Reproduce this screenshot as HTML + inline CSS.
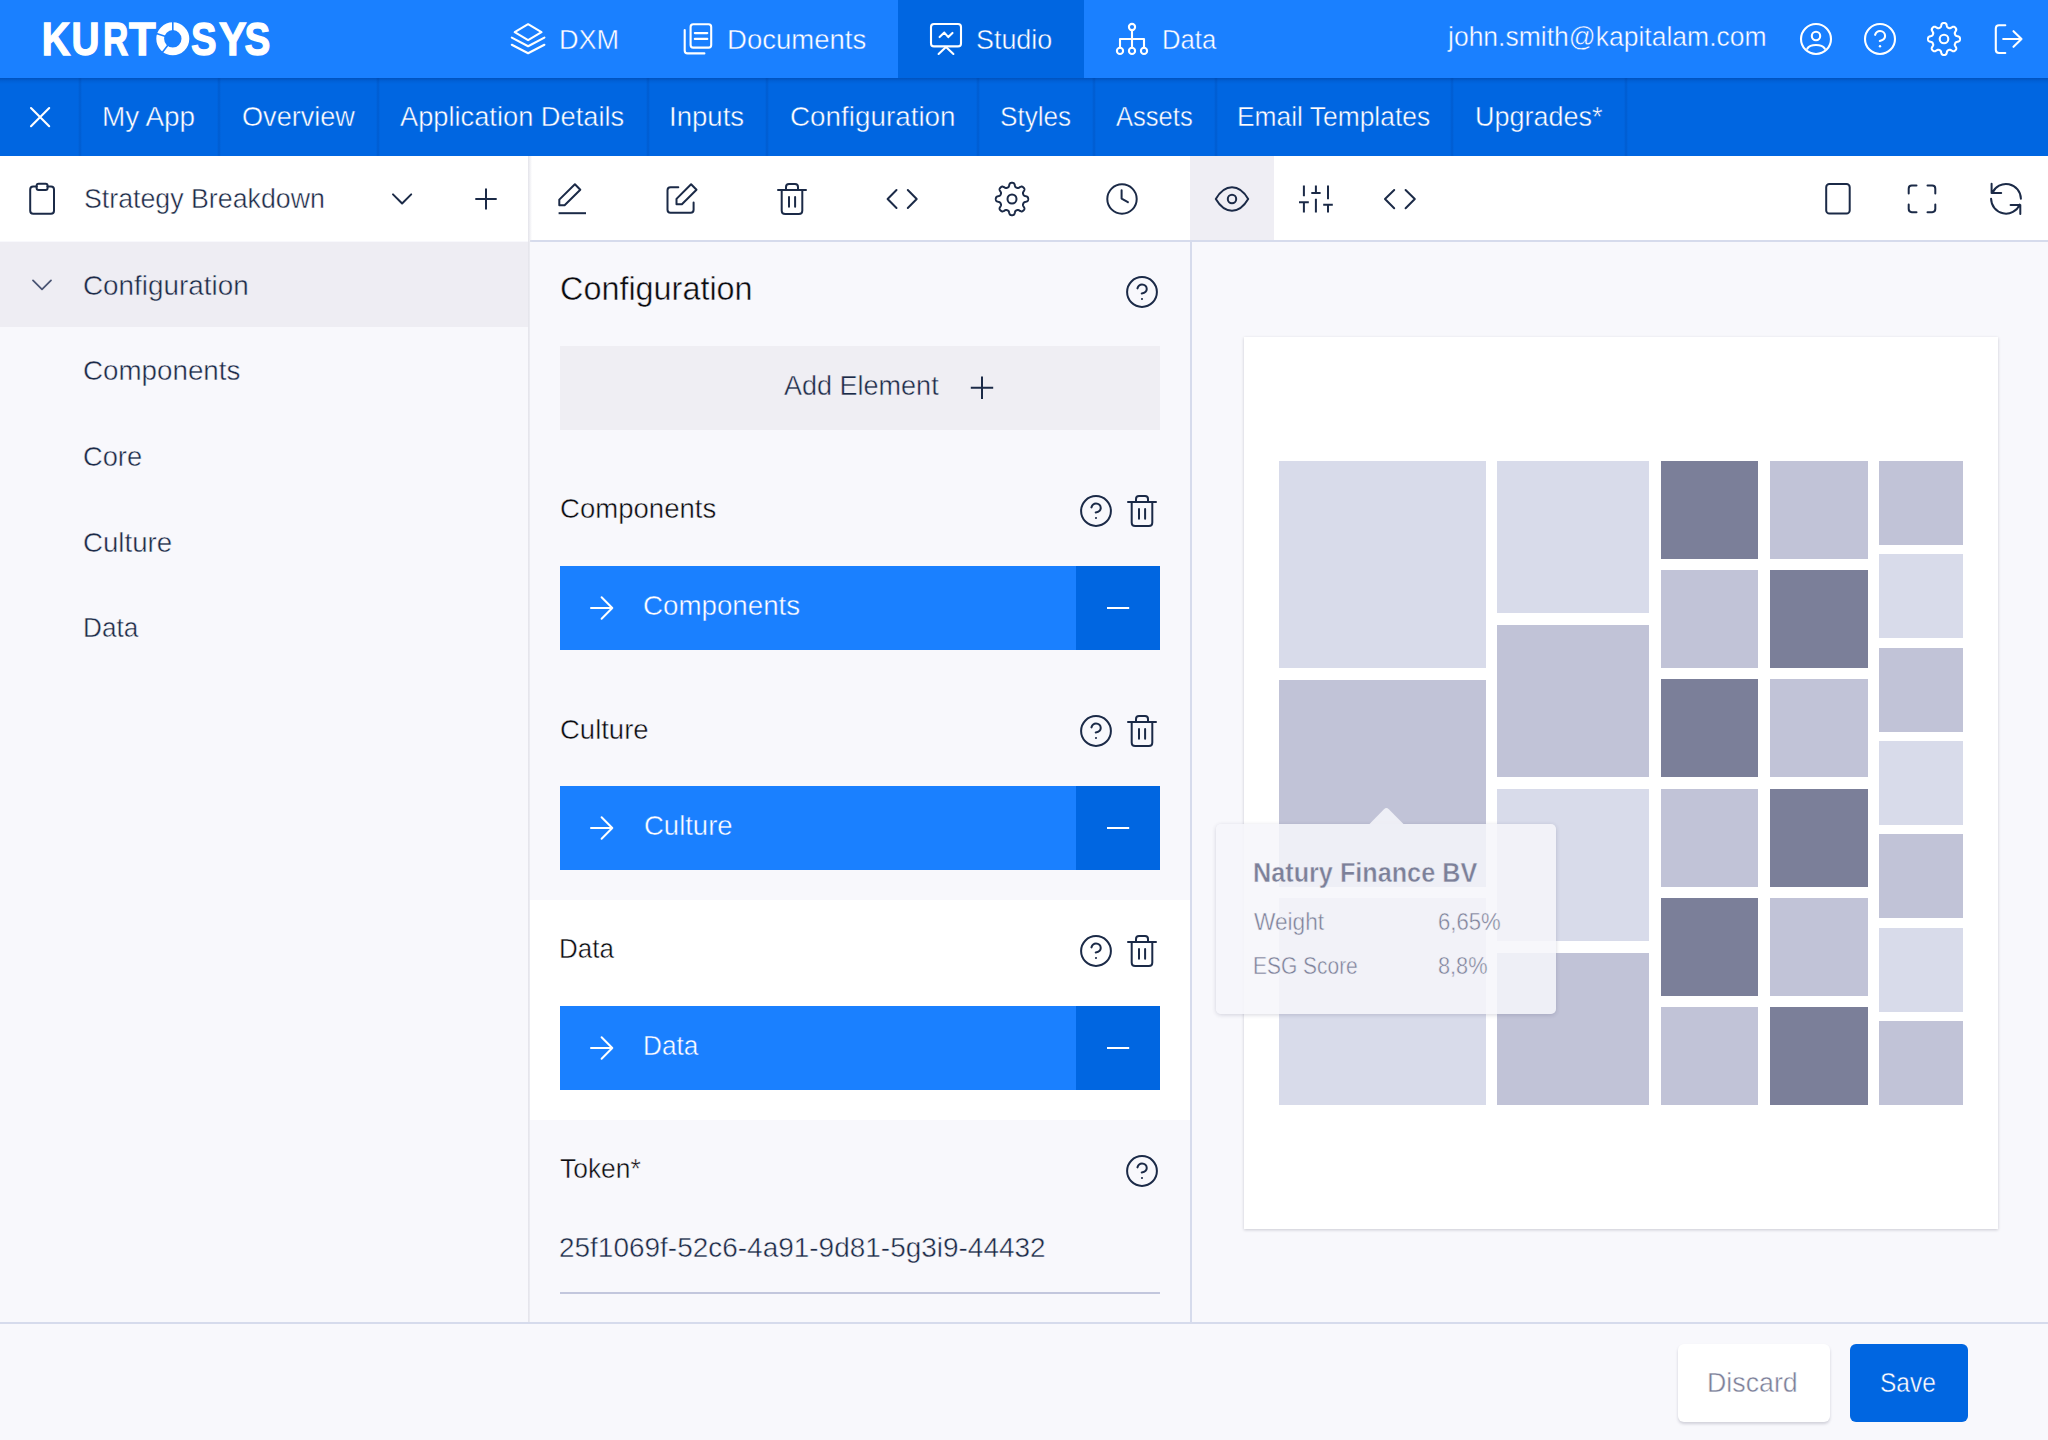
<!DOCTYPE html>
<html><head><meta charset="utf-8">
<style>
*{margin:0;padding:0;box-sizing:border-box}
html,body{width:2048px;height:1440px;overflow:hidden;background:#f8f8fc;font-family:"Liberation Sans",sans-serif;position:relative}
.a{position:absolute}
.t{position:absolute;white-space:nowrap;line-height:1;transform-origin:0 0}
svg{overflow:visible}
</style></head>
<body>
<div class="a" style="left:0px;top:0px;width:2048px;height:78px;background:#1a80ff;"></div>
<div class="a" style="left:898px;top:0px;width:186px;height:78px;background:#0066e1;"></div>
<div class="a" style="left:0px;top:78px;width:2048px;height:78px;background:#0066e1;"></div>
<div class="a" style="left:0px;top:78px;width:2048px;height:6px;background:linear-gradient(rgba(0,25,90,0.26),rgba(0,25,90,0.08) 50%,rgba(0,25,90,0));"></div>
<div class="a" style="left:78px;top:78px;width:4px;height:78px;background:linear-gradient(90deg,rgba(0,30,100,0),rgba(0,30,100,0.14),rgba(0,30,100,0));"></div>
<div class="a" style="left:217px;top:78px;width:4px;height:78px;background:linear-gradient(90deg,rgba(0,30,100,0),rgba(0,30,100,0.14),rgba(0,30,100,0));"></div>
<div class="a" style="left:376px;top:78px;width:4px;height:78px;background:linear-gradient(90deg,rgba(0,30,100,0),rgba(0,30,100,0.14),rgba(0,30,100,0));"></div>
<div class="a" style="left:646px;top:78px;width:4px;height:78px;background:linear-gradient(90deg,rgba(0,30,100,0),rgba(0,30,100,0.14),rgba(0,30,100,0));"></div>
<div class="a" style="left:765px;top:78px;width:4px;height:78px;background:linear-gradient(90deg,rgba(0,30,100,0),rgba(0,30,100,0.14),rgba(0,30,100,0));"></div>
<div class="a" style="left:976px;top:78px;width:4px;height:78px;background:linear-gradient(90deg,rgba(0,30,100,0),rgba(0,30,100,0.14),rgba(0,30,100,0));"></div>
<div class="a" style="left:1092px;top:78px;width:4px;height:78px;background:linear-gradient(90deg,rgba(0,30,100,0),rgba(0,30,100,0.14),rgba(0,30,100,0));"></div>
<div class="a" style="left:1214px;top:78px;width:4px;height:78px;background:linear-gradient(90deg,rgba(0,30,100,0),rgba(0,30,100,0.14),rgba(0,30,100,0));"></div>
<div class="a" style="left:1450px;top:78px;width:4px;height:78px;background:linear-gradient(90deg,rgba(0,30,100,0),rgba(0,30,100,0.14),rgba(0,30,100,0));"></div>
<div class="a" style="left:1624px;top:78px;width:4px;height:78px;background:linear-gradient(90deg,rgba(0,30,100,0),rgba(0,30,100,0.14),rgba(0,30,100,0));"></div>
<div class="a" style="left:0px;top:156px;width:2048px;height:85px;background:#fff;"></div>
<div class="a" style="left:1190px;top:156px;width:84px;height:85px;background:#efeef4;"></div>
<div class="a" style="left:530px;top:240px;width:1518px;height:2px;background:#d6dbec;"></div>
<div class="a" style="left:0px;top:242px;width:528px;height:85px;background:#eeedf3;"></div>
<div class="a" style="left:528px;top:156px;width:4px;height:1167px;background:linear-gradient(90deg,#e3e3ea,rgba(240,240,245,0));"></div>
<div class="a" style="left:530px;top:242px;width:660px;height:1081px;background:#f8f8fc;"></div>
<div class="a" style="left:530px;top:900px;width:660px;height:220px;background:#fff;"></div>
<div class="a" style="left:1190px;top:242px;width:2px;height:1081px;background:#d6dbec;"></div>
<div class="a" style="left:560px;top:346px;width:600px;height:84px;background:#efeef3;"></div>
<div class="a" style="left:560px;top:566px;width:600px;height:84px;background:#1a80ff;"></div>
<div class="a" style="left:1076px;top:566px;width:84px;height:84px;background:#0066e1;"></div>
<div class="a" style="left:560px;top:786px;width:600px;height:84px;background:#1a80ff;"></div>
<div class="a" style="left:1076px;top:786px;width:84px;height:84px;background:#0066e1;"></div>
<div class="a" style="left:560px;top:1006px;width:600px;height:84px;background:#1a80ff;"></div>
<div class="a" style="left:1076px;top:1006px;width:84px;height:84px;background:#0066e1;"></div>
<div class="a" style="left:560px;top:1292px;width:600px;height:2px;background:#c3c7dd;"></div>
<div class="a" style="left:1244px;top:337px;width:754px;height:892px;background:#fff;box-shadow:0 1px 3px rgba(20,20,40,0.2)"></div>
<div class="a" style="left:1279px;top:461.0px;width:207px;height:207.0px;background:#d8dbea;"></div>
<div class="a" style="left:1279px;top:679.5px;width:207px;height:207.0px;background:#c1c3d7;"></div>
<div class="a" style="left:1279px;top:898.0px;width:207px;height:207.0px;background:#d8dbea;"></div>
<div class="a" style="left:1497px;top:461.0px;width:152px;height:152.0px;background:#d8dbea;"></div>
<div class="a" style="left:1497px;top:625.0px;width:152px;height:152.0px;background:#c1c3d7;"></div>
<div class="a" style="left:1497px;top:789.0px;width:152px;height:152.0px;background:#d8dbea;"></div>
<div class="a" style="left:1497px;top:953.0px;width:152px;height:152.0px;background:#c1c3d7;"></div>
<div class="a" style="left:1661px;top:461.0px;width:97.40000000000009px;height:98.0px;background:#7b7f99;"></div>
<div class="a" style="left:1661px;top:570.2px;width:97.40000000000009px;height:98.0px;background:#c1c3d7;"></div>
<div class="a" style="left:1661px;top:679.4px;width:97.40000000000009px;height:98.0px;background:#7b7f99;"></div>
<div class="a" style="left:1661px;top:788.6px;width:97.40000000000009px;height:98.0px;background:#c1c3d7;"></div>
<div class="a" style="left:1661px;top:897.8px;width:97.40000000000009px;height:98.0px;background:#7b7f99;"></div>
<div class="a" style="left:1661px;top:1007.0px;width:97.40000000000009px;height:98.0px;background:#c1c3d7;"></div>
<div class="a" style="left:1769.8px;top:461.0px;width:97.79999999999995px;height:98.0px;background:#c1c3d7;"></div>
<div class="a" style="left:1769.8px;top:570.2px;width:97.79999999999995px;height:98.0px;background:#7b7f99;"></div>
<div class="a" style="left:1769.8px;top:679.4px;width:97.79999999999995px;height:98.0px;background:#c1c3d7;"></div>
<div class="a" style="left:1769.8px;top:788.6px;width:97.79999999999995px;height:98.0px;background:#7b7f99;"></div>
<div class="a" style="left:1769.8px;top:897.8px;width:97.79999999999995px;height:98.0px;background:#c1c3d7;"></div>
<div class="a" style="left:1769.8px;top:1007.0px;width:97.79999999999995px;height:98.0px;background:#7b7f99;"></div>
<div class="a" style="left:1879px;top:461.0px;width:84px;height:84.0px;background:#c1c3d7;"></div>
<div class="a" style="left:1879px;top:554.33px;width:84px;height:84.0px;background:#d8dbea;"></div>
<div class="a" style="left:1879px;top:647.67px;width:84px;height:84.0px;background:#c1c3d7;"></div>
<div class="a" style="left:1879px;top:741.0px;width:84px;height:84.0px;background:#d8dbea;"></div>
<div class="a" style="left:1879px;top:834.33px;width:84px;height:84.0px;background:#c1c3d7;"></div>
<div class="a" style="left:1879px;top:927.66px;width:84px;height:84.0px;background:#d8dbea;"></div>
<div class="a" style="left:1879px;top:1021.0px;width:84px;height:84.0px;background:#c1c3d7;"></div>
<div class="a" style="left:1216px;top:824px;width:340px;height:190px;background:rgba(246,246,250,0.86);border-radius:5px;box-shadow:0 1px 4px rgba(40,40,80,0.18)"></div>
<svg class="a" style="left:0;top:0" width="2048" height="1440"><path d="M1369.5,824 L1384,809.2 Q1386.4,806.8 1388.8,809.2 L1403.5,824 Z" fill="rgba(246,246,250,0.86)"/></svg>
<div class="a" style="left:0px;top:1322px;width:2048px;height:2px;background:#d6dbec;"></div>
<div class="a" style="left:1678px;top:1344px;width:152px;height:78px;background:#fff;border-radius:6px;box-shadow:0 2px 3px rgba(30,30,60,0.18)"></div>
<div class="a" style="left:1850px;top:1344px;width:118px;height:78px;background:#0066e1;border-radius:6px"></div>
<svg class="a" style="left:0;top:0" width="2048" height="1440"><g fill="none" stroke="#fff" stroke-width="2.1" stroke-linecap="round" stroke-linejoin="round"><path d="M528.1,24.2 L541.5,32.2 L528.1,40.1 L514.7,32.2 Z"/><path d="M511.8,37.6 L528.1,46.2 L544.4,37.6"/><path d="M511.8,44.8 L528.1,53.2 L544.4,44.8"/><rect x="690.6" y="24.3" width="20.6" height="23.3" rx="2.6"/><path d="M694.8,33.1 H707.3 M694.8,38.9 H707.3"/><path d="M684.7,30 V50.5 Q684.7,53.4 687.6,53.4 H704.4"/><rect x="931" y="24" width="30" height="22.4" rx="3"/><path d="M939.6,37.1 L944.3,32.6 L948.3,37.1 L952.5,32.9"/><path d="M938.6,54 L946,47 L953.4,54"/><circle cx="1132" cy="27" r="3.1"/><circle cx="1120" cy="50.9" r="3.1"/><circle cx="1132" cy="50.9" r="3.1"/><circle cx="1144" cy="50.9" r="3.1"/><path d="M1132,30.1 V47.8 M1120,47.8 V39 H1144 V47.8"/><circle cx="1816" cy="39" r="15"/><circle cx="1816" cy="36" r="4.2"/><path d="M1807.3,48.6 C1809,45.8 1812,45 1816,45 C1820,45 1823,45.8 1824.8,48.6"/><circle cx="1880" cy="39" r="15"/><path d="M1875.1,34.8 C1876,32.2 1878,31 1880,31 C1882.9,31 1885.1,33.1 1885.1,35.9 C1885.1,38.9 1882.6,40.2 1879.8,40.9"/><circle cx="1880" cy="46.3" r="1.2" fill="#fff" stroke="none"/><path d="M1944.00,23.00 L1944.21,23.00 L1944.42,23.02 L1944.63,23.04 L1944.84,23.07 L1945.04,23.11 L1945.25,23.17 L1945.45,23.24 L1945.65,23.35 L1945.84,23.48 L1946.02,23.65 L1946.19,23.88 L1946.35,24.15 L1946.49,24.49 L1946.62,24.86 L1946.73,25.27 L1946.83,25.67 L1946.93,26.05 L1947.03,26.39 L1947.13,26.67 L1947.24,26.90 L1947.36,27.09 L1947.48,27.24 L1947.61,27.37 L1947.74,27.47 L1947.88,27.57 L1948.02,27.65 L1948.16,27.72 L1948.30,27.79 L1948.45,27.85 L1948.59,27.91 L1948.74,27.97 L1948.89,28.03 L1949.03,28.08 L1949.19,28.13 L1949.34,28.17 L1949.50,28.20 L1949.67,28.22 L1949.85,28.23 L1950.05,28.21 L1950.26,28.16 L1950.50,28.07 L1950.78,27.94 L1951.08,27.77 L1951.42,27.57 L1951.78,27.36 L1952.14,27.15 L1952.50,26.97 L1952.83,26.84 L1953.14,26.76 L1953.42,26.72 L1953.68,26.73 L1953.91,26.77 L1954.12,26.84 L1954.31,26.92 L1954.50,27.03 L1954.68,27.14 L1954.84,27.27 L1955.01,27.40 L1955.16,27.54 L1955.31,27.69 L1955.46,27.84 L1955.60,27.99 L1955.73,28.16 L1955.86,28.32 L1955.97,28.50 L1956.08,28.69 L1956.16,28.88 L1956.23,29.09 L1956.27,29.32 L1956.28,29.58 L1956.24,29.86 L1956.16,30.17 L1956.03,30.50 L1955.85,30.86 L1955.64,31.22 L1955.43,31.58 L1955.23,31.92 L1955.06,32.22 L1954.93,32.50 L1954.84,32.74 L1954.79,32.95 L1954.77,33.15 L1954.78,33.33 L1954.80,33.50 L1954.83,33.66 L1954.87,33.81 L1954.92,33.97 L1954.97,34.11 L1955.03,34.26 L1955.09,34.41 L1955.15,34.55 L1955.21,34.70 L1955.28,34.84 L1955.35,34.98 L1955.43,35.12 L1955.53,35.26 L1955.63,35.39 L1955.76,35.52 L1955.91,35.64 L1956.10,35.76 L1956.33,35.87 L1956.61,35.97 L1956.95,36.07 L1957.33,36.17 L1957.73,36.27 L1958.14,36.38 L1958.51,36.51 L1958.85,36.65 L1959.12,36.81 L1959.35,36.98 L1959.52,37.16 L1959.65,37.35 L1959.76,37.55 L1959.83,37.75 L1959.89,37.96 L1959.93,38.16 L1959.96,38.37 L1959.98,38.58 L1960.00,38.79 L1960.00,39.00 L1960.00,39.21 L1959.98,39.42 L1959.96,39.63 L1959.93,39.84 L1959.89,40.04 L1959.83,40.25 L1959.76,40.45 L1959.65,40.65 L1959.52,40.84 L1959.35,41.02 L1959.12,41.19 L1958.85,41.35 L1958.51,41.49 L1958.14,41.62 L1957.73,41.73 L1957.33,41.83 L1956.95,41.93 L1956.61,42.03 L1956.33,42.13 L1956.10,42.24 L1955.91,42.36 L1955.76,42.48 L1955.63,42.61 L1955.53,42.74 L1955.43,42.88 L1955.35,43.02 L1955.28,43.16 L1955.21,43.30 L1955.15,43.45 L1955.09,43.59 L1955.03,43.74 L1954.97,43.89 L1954.92,44.03 L1954.87,44.19 L1954.83,44.34 L1954.80,44.50 L1954.78,44.67 L1954.77,44.85 L1954.79,45.05 L1954.84,45.26 L1954.93,45.50 L1955.06,45.78 L1955.23,46.08 L1955.43,46.42 L1955.64,46.78 L1955.85,47.14 L1956.03,47.50 L1956.16,47.83 L1956.24,48.14 L1956.28,48.42 L1956.27,48.68 L1956.23,48.91 L1956.16,49.12 L1956.08,49.31 L1955.97,49.50 L1955.86,49.68 L1955.73,49.84 L1955.60,50.01 L1955.46,50.16 L1955.31,50.31 L1955.16,50.46 L1955.01,50.60 L1954.84,50.73 L1954.68,50.86 L1954.50,50.97 L1954.31,51.08 L1954.12,51.16 L1953.91,51.23 L1953.68,51.27 L1953.42,51.28 L1953.14,51.24 L1952.83,51.16 L1952.50,51.03 L1952.14,50.85 L1951.78,50.64 L1951.42,50.43 L1951.08,50.23 L1950.78,50.06 L1950.50,49.93 L1950.26,49.84 L1950.05,49.79 L1949.85,49.77 L1949.67,49.78 L1949.50,49.80 L1949.34,49.83 L1949.19,49.87 L1949.03,49.92 L1948.89,49.97 L1948.74,50.03 L1948.59,50.09 L1948.45,50.15 L1948.30,50.21 L1948.16,50.28 L1948.02,50.35 L1947.88,50.43 L1947.74,50.53 L1947.61,50.63 L1947.48,50.76 L1947.36,50.91 L1947.24,51.10 L1947.13,51.33 L1947.03,51.61 L1946.93,51.95 L1946.83,52.33 L1946.73,52.73 L1946.62,53.14 L1946.49,53.51 L1946.35,53.85 L1946.19,54.12 L1946.02,54.35 L1945.84,54.52 L1945.65,54.65 L1945.45,54.76 L1945.25,54.83 L1945.04,54.89 L1944.84,54.93 L1944.63,54.96 L1944.42,54.98 L1944.21,55.00 L1944.00,55.00 L1943.79,55.00 L1943.58,54.98 L1943.37,54.96 L1943.16,54.93 L1942.96,54.89 L1942.75,54.83 L1942.55,54.76 L1942.35,54.65 L1942.16,54.52 L1941.98,54.35 L1941.81,54.12 L1941.65,53.85 L1941.51,53.51 L1941.38,53.14 L1941.27,52.73 L1941.17,52.33 L1941.07,51.95 L1940.97,51.61 L1940.87,51.33 L1940.76,51.10 L1940.64,50.91 L1940.52,50.76 L1940.39,50.63 L1940.26,50.53 L1940.12,50.43 L1939.98,50.35 L1939.84,50.28 L1939.70,50.21 L1939.55,50.15 L1939.41,50.09 L1939.26,50.03 L1939.11,49.97 L1938.97,49.92 L1938.81,49.87 L1938.66,49.83 L1938.50,49.80 L1938.33,49.78 L1938.15,49.77 L1937.95,49.79 L1937.74,49.84 L1937.50,49.93 L1937.22,50.06 L1936.92,50.23 L1936.58,50.43 L1936.22,50.64 L1935.86,50.85 L1935.50,51.03 L1935.17,51.16 L1934.86,51.24 L1934.58,51.28 L1934.32,51.27 L1934.09,51.23 L1933.88,51.16 L1933.69,51.08 L1933.50,50.97 L1933.32,50.86 L1933.16,50.73 L1932.99,50.60 L1932.84,50.46 L1932.69,50.31 L1932.54,50.16 L1932.40,50.01 L1932.27,49.84 L1932.14,49.68 L1932.03,49.50 L1931.92,49.31 L1931.84,49.12 L1931.77,48.91 L1931.73,48.68 L1931.72,48.42 L1931.76,48.14 L1931.84,47.83 L1931.97,47.50 L1932.15,47.14 L1932.36,46.78 L1932.57,46.42 L1932.77,46.08 L1932.94,45.78 L1933.07,45.50 L1933.16,45.26 L1933.21,45.05 L1933.23,44.85 L1933.22,44.67 L1933.20,44.50 L1933.17,44.34 L1933.13,44.19 L1933.08,44.03 L1933.03,43.89 L1932.97,43.74 L1932.91,43.59 L1932.85,43.45 L1932.79,43.30 L1932.72,43.16 L1932.65,43.02 L1932.57,42.88 L1932.47,42.74 L1932.37,42.61 L1932.24,42.48 L1932.09,42.36 L1931.90,42.24 L1931.67,42.13 L1931.39,42.03 L1931.05,41.93 L1930.67,41.83 L1930.27,41.73 L1929.86,41.62 L1929.49,41.49 L1929.15,41.35 L1928.88,41.19 L1928.65,41.02 L1928.48,40.84 L1928.35,40.65 L1928.24,40.45 L1928.17,40.25 L1928.11,40.04 L1928.07,39.84 L1928.04,39.63 L1928.02,39.42 L1928.00,39.21 L1928.00,39.00 L1928.00,38.79 L1928.02,38.58 L1928.04,38.37 L1928.07,38.16 L1928.11,37.96 L1928.17,37.75 L1928.24,37.55 L1928.35,37.35 L1928.48,37.16 L1928.65,36.98 L1928.88,36.81 L1929.15,36.65 L1929.49,36.51 L1929.86,36.38 L1930.27,36.27 L1930.67,36.17 L1931.05,36.07 L1931.39,35.97 L1931.67,35.87 L1931.90,35.76 L1932.09,35.64 L1932.24,35.52 L1932.37,35.39 L1932.47,35.26 L1932.57,35.12 L1932.65,34.98 L1932.72,34.84 L1932.79,34.70 L1932.85,34.55 L1932.91,34.41 L1932.97,34.26 L1933.03,34.11 L1933.08,33.97 L1933.13,33.81 L1933.17,33.66 L1933.20,33.50 L1933.22,33.33 L1933.23,33.15 L1933.21,32.95 L1933.16,32.74 L1933.07,32.50 L1932.94,32.22 L1932.77,31.92 L1932.57,31.58 L1932.36,31.22 L1932.15,30.86 L1931.97,30.50 L1931.84,30.17 L1931.76,29.86 L1931.72,29.58 L1931.73,29.32 L1931.77,29.09 L1931.84,28.88 L1931.92,28.69 L1932.03,28.50 L1932.14,28.32 L1932.27,28.16 L1932.40,27.99 L1932.54,27.84 L1932.69,27.69 L1932.84,27.54 L1932.99,27.40 L1933.16,27.27 L1933.32,27.14 L1933.50,27.03 L1933.69,26.92 L1933.88,26.84 L1934.09,26.77 L1934.32,26.73 L1934.58,26.72 L1934.86,26.76 L1935.17,26.84 L1935.50,26.97 L1935.86,27.15 L1936.22,27.36 L1936.58,27.57 L1936.92,27.77 L1937.22,27.94 L1937.50,28.07 L1937.74,28.16 L1937.95,28.21 L1938.15,28.23 L1938.33,28.22 L1938.50,28.20 L1938.66,28.17 L1938.81,28.13 L1938.97,28.08 L1939.11,28.03 L1939.26,27.97 L1939.41,27.91 L1939.55,27.85 L1939.70,27.79 L1939.84,27.72 L1939.98,27.65 L1940.12,27.57 L1940.26,27.47 L1940.39,27.37 L1940.52,27.24 L1940.64,27.09 L1940.76,26.90 L1940.87,26.67 L1940.97,26.39 L1941.07,26.05 L1941.17,25.67 L1941.27,25.27 L1941.38,24.86 L1941.51,24.49 L1941.65,24.15 L1941.81,23.88 L1941.98,23.65 L1942.16,23.48 L1942.35,23.35 L1942.55,23.24 L1942.75,23.17 L1942.96,23.11 L1943.16,23.07 L1943.37,23.04 L1943.58,23.02 L1943.79,23.00 Z"/><circle cx="1944" cy="39" r="4.3"/><path d="M2005.3,25.2 H1999 Q1995.8,25.2 1995.8,28.4 V49.8 Q1995.8,53 1999,53 H2005.3"/><path d="M2003.2,39 H2021.5 M2013.5,31.2 L2021.5,39 L2013.5,46.8"/><path d="M31,108 L49.2,126.2 M49.2,108 L31,126.2"/></g><g fill="none" stroke="#fff" stroke-width="2" stroke-linecap="round" stroke-linejoin="round"><path d="M591,608 H612.3 M601.6,597.3 L612.3,608 L601.6,618.7"/><path d="M1107,608 H1129.2" stroke-linecap="butt"/><path d="M591,828 H612.3 M601.6,817.3 L612.3,828 L601.6,838.7"/><path d="M1107,828 H1129.2" stroke-linecap="butt"/><path d="M591,1048 H612.3 M601.6,1037.3 L612.3,1048 L601.6,1058.7"/><path d="M1107,1048 H1129.2" stroke-linecap="butt"/></g><g fill="none" stroke="#1b2a47" stroke-width="2" stroke-linecap="round" stroke-linejoin="round"><path d="M36.8,186.6 H33.2 Q30.2,186.6 30.2,189.6 V210.8 Q30.2,213.8 33.2,213.8 H51 Q54,213.8 54,210.8 V189.6 Q54,186.6 51,186.6 H47.4"/><rect x="36.6" y="183.8" width="11" height="6.2" rx="2"/><path d="M393,194.4 L402.1,203.5 L411.2,194.4"/><path d="M486,188.5 V209.5 M475.3,199 H496.7" stroke-linecap="butt"/><path d="M559.3,205.3 V199.6 L574.9,184.3 L580.3,189.8 L564.6,205.3 Z"/><path d="M558.6,213.2 H586" stroke-linecap="butt"/><path d="M678.3,187.3 H670.5 Q667.5,187.3 667.5,190.3 V209.8 Q667.5,212.8 670.5,212.8 H690.6 Q693.6,212.8 693.6,209.8 V202.6"/><path d="M676.5,204.2 V198.9 L691.1,184.3 L696.5,189.8 L681.9,204.2 Z"/><path d="M778,190 H806"/><path d="M786,190 V187 Q786,184 789,184 H795 Q798,184 798,187 V190"/><path d="M781.7,190 V210.5 Q781.7,214 785.2,214 H798.8 Q802.3,214 802.3,210.5 V190"/><path d="M789,197 V206.7 M795.1,197 V206.7"/><path d="M896.5,190 L887.6,199 L896.5,208 M907.8,190 L916.7,199 L907.8,208"/><path d="M1012.00,182.80 L1012.21,182.80 L1012.42,182.82 L1012.64,182.84 L1012.85,182.87 L1013.05,182.91 L1013.26,182.97 L1013.47,183.05 L1013.67,183.15 L1013.86,183.28 L1014.05,183.46 L1014.22,183.68 L1014.38,183.96 L1014.53,184.29 L1014.66,184.67 L1014.77,185.07 L1014.87,185.48 L1014.97,185.86 L1015.07,186.19 L1015.18,186.48 L1015.29,186.71 L1015.41,186.90 L1015.54,187.05 L1015.67,187.18 L1015.81,187.28 L1015.95,187.38 L1016.09,187.46 L1016.23,187.53 L1016.38,187.60 L1016.52,187.67 L1016.67,187.73 L1016.82,187.79 L1016.97,187.85 L1017.12,187.90 L1017.27,187.95 L1017.43,187.99 L1017.59,188.02 L1017.76,188.05 L1017.95,188.05 L1018.14,188.03 L1018.36,187.98 L1018.61,187.90 L1018.88,187.77 L1019.19,187.60 L1019.53,187.41 L1019.89,187.19 L1020.26,186.99 L1020.61,186.81 L1020.95,186.68 L1021.26,186.60 L1021.54,186.56 L1021.80,186.57 L1022.03,186.61 L1022.24,186.68 L1022.44,186.77 L1022.63,186.88 L1022.81,186.99 L1022.98,187.12 L1023.14,187.26 L1023.30,187.40 L1023.46,187.54 L1023.60,187.70 L1023.74,187.86 L1023.88,188.02 L1024.01,188.19 L1024.12,188.37 L1024.23,188.56 L1024.32,188.76 L1024.39,188.97 L1024.43,189.20 L1024.44,189.46 L1024.40,189.74 L1024.32,190.05 L1024.19,190.39 L1024.01,190.74 L1023.81,191.11 L1023.59,191.47 L1023.40,191.81 L1023.23,192.12 L1023.10,192.39 L1023.02,192.64 L1022.97,192.86 L1022.95,193.05 L1022.95,193.24 L1022.98,193.41 L1023.01,193.57 L1023.05,193.73 L1023.10,193.88 L1023.15,194.03 L1023.21,194.18 L1023.27,194.33 L1023.33,194.48 L1023.40,194.62 L1023.47,194.77 L1023.54,194.91 L1023.62,195.05 L1023.72,195.19 L1023.82,195.33 L1023.95,195.46 L1024.10,195.59 L1024.29,195.71 L1024.52,195.82 L1024.81,195.93 L1025.14,196.03 L1025.52,196.13 L1025.93,196.23 L1026.33,196.34 L1026.71,196.47 L1027.04,196.62 L1027.32,196.78 L1027.54,196.95 L1027.72,197.14 L1027.85,197.33 L1027.95,197.53 L1028.03,197.74 L1028.09,197.95 L1028.13,198.15 L1028.16,198.36 L1028.18,198.58 L1028.20,198.79 L1028.20,199.00 L1028.20,199.21 L1028.18,199.42 L1028.16,199.64 L1028.13,199.85 L1028.09,200.05 L1028.03,200.26 L1027.95,200.47 L1027.85,200.67 L1027.72,200.86 L1027.54,201.05 L1027.32,201.22 L1027.04,201.38 L1026.71,201.53 L1026.33,201.66 L1025.93,201.77 L1025.52,201.87 L1025.14,201.97 L1024.81,202.07 L1024.52,202.18 L1024.29,202.29 L1024.10,202.41 L1023.95,202.54 L1023.82,202.67 L1023.72,202.81 L1023.62,202.95 L1023.54,203.09 L1023.47,203.23 L1023.40,203.38 L1023.33,203.52 L1023.27,203.67 L1023.21,203.82 L1023.15,203.97 L1023.10,204.12 L1023.05,204.27 L1023.01,204.43 L1022.98,204.59 L1022.95,204.76 L1022.95,204.95 L1022.97,205.14 L1023.02,205.36 L1023.10,205.61 L1023.23,205.88 L1023.40,206.19 L1023.59,206.53 L1023.81,206.89 L1024.01,207.26 L1024.19,207.61 L1024.32,207.95 L1024.40,208.26 L1024.44,208.54 L1024.43,208.80 L1024.39,209.03 L1024.32,209.24 L1024.23,209.44 L1024.12,209.63 L1024.01,209.81 L1023.88,209.98 L1023.74,210.14 L1023.60,210.30 L1023.46,210.46 L1023.30,210.60 L1023.14,210.74 L1022.98,210.88 L1022.81,211.01 L1022.63,211.12 L1022.44,211.23 L1022.24,211.32 L1022.03,211.39 L1021.80,211.43 L1021.54,211.44 L1021.26,211.40 L1020.95,211.32 L1020.61,211.19 L1020.26,211.01 L1019.89,210.81 L1019.53,210.59 L1019.19,210.40 L1018.88,210.23 L1018.61,210.10 L1018.36,210.02 L1018.14,209.97 L1017.95,209.95 L1017.76,209.95 L1017.59,209.98 L1017.43,210.01 L1017.27,210.05 L1017.12,210.10 L1016.97,210.15 L1016.82,210.21 L1016.67,210.27 L1016.52,210.33 L1016.38,210.40 L1016.23,210.47 L1016.09,210.54 L1015.95,210.62 L1015.81,210.72 L1015.67,210.82 L1015.54,210.95 L1015.41,211.10 L1015.29,211.29 L1015.18,211.52 L1015.07,211.81 L1014.97,212.14 L1014.87,212.52 L1014.77,212.93 L1014.66,213.33 L1014.53,213.71 L1014.38,214.04 L1014.22,214.32 L1014.05,214.54 L1013.86,214.72 L1013.67,214.85 L1013.47,214.95 L1013.26,215.03 L1013.05,215.09 L1012.85,215.13 L1012.64,215.16 L1012.42,215.18 L1012.21,215.20 L1012.00,215.20 L1011.79,215.20 L1011.58,215.18 L1011.36,215.16 L1011.15,215.13 L1010.95,215.09 L1010.74,215.03 L1010.53,214.95 L1010.33,214.85 L1010.14,214.72 L1009.95,214.54 L1009.78,214.32 L1009.62,214.04 L1009.47,213.71 L1009.34,213.33 L1009.23,212.93 L1009.13,212.52 L1009.03,212.14 L1008.93,211.81 L1008.82,211.52 L1008.71,211.29 L1008.59,211.10 L1008.46,210.95 L1008.33,210.82 L1008.19,210.72 L1008.05,210.62 L1007.91,210.54 L1007.77,210.47 L1007.62,210.40 L1007.48,210.33 L1007.33,210.27 L1007.18,210.21 L1007.03,210.15 L1006.88,210.10 L1006.73,210.05 L1006.57,210.01 L1006.41,209.98 L1006.24,209.95 L1006.05,209.95 L1005.86,209.97 L1005.64,210.02 L1005.39,210.10 L1005.12,210.23 L1004.81,210.40 L1004.47,210.59 L1004.11,210.81 L1003.74,211.01 L1003.39,211.19 L1003.05,211.32 L1002.74,211.40 L1002.46,211.44 L1002.20,211.43 L1001.97,211.39 L1001.76,211.32 L1001.56,211.23 L1001.37,211.12 L1001.19,211.01 L1001.02,210.88 L1000.86,210.74 L1000.70,210.60 L1000.54,210.46 L1000.40,210.30 L1000.26,210.14 L1000.12,209.98 L999.99,209.81 L999.88,209.63 L999.77,209.44 L999.68,209.24 L999.61,209.03 L999.57,208.80 L999.56,208.54 L999.60,208.26 L999.68,207.95 L999.81,207.61 L999.99,207.26 L1000.19,206.89 L1000.41,206.53 L1000.60,206.19 L1000.77,205.88 L1000.90,205.61 L1000.98,205.36 L1001.03,205.14 L1001.05,204.95 L1001.05,204.76 L1001.02,204.59 L1000.99,204.43 L1000.95,204.27 L1000.90,204.12 L1000.85,203.97 L1000.79,203.82 L1000.73,203.67 L1000.67,203.52 L1000.60,203.38 L1000.53,203.23 L1000.46,203.09 L1000.38,202.95 L1000.28,202.81 L1000.18,202.67 L1000.05,202.54 L999.90,202.41 L999.71,202.29 L999.48,202.18 L999.19,202.07 L998.86,201.97 L998.48,201.87 L998.07,201.77 L997.67,201.66 L997.29,201.53 L996.96,201.38 L996.68,201.22 L996.46,201.05 L996.28,200.86 L996.15,200.67 L996.05,200.47 L995.97,200.26 L995.91,200.05 L995.87,199.85 L995.84,199.64 L995.82,199.42 L995.80,199.21 L995.80,199.00 L995.80,198.79 L995.82,198.58 L995.84,198.36 L995.87,198.15 L995.91,197.95 L995.97,197.74 L996.05,197.53 L996.15,197.33 L996.28,197.14 L996.46,196.95 L996.68,196.78 L996.96,196.62 L997.29,196.47 L997.67,196.34 L998.07,196.23 L998.48,196.13 L998.86,196.03 L999.19,195.93 L999.48,195.82 L999.71,195.71 L999.90,195.59 L1000.05,195.46 L1000.18,195.33 L1000.28,195.19 L1000.38,195.05 L1000.46,194.91 L1000.53,194.77 L1000.60,194.62 L1000.67,194.48 L1000.73,194.33 L1000.79,194.18 L1000.85,194.03 L1000.90,193.88 L1000.95,193.73 L1000.99,193.57 L1001.02,193.41 L1001.05,193.24 L1001.05,193.05 L1001.03,192.86 L1000.98,192.64 L1000.90,192.39 L1000.77,192.12 L1000.60,191.81 L1000.41,191.47 L1000.19,191.11 L999.99,190.74 L999.81,190.39 L999.68,190.05 L999.60,189.74 L999.56,189.46 L999.57,189.20 L999.61,188.97 L999.68,188.76 L999.77,188.56 L999.88,188.37 L999.99,188.19 L1000.12,188.02 L1000.26,187.86 L1000.40,187.70 L1000.54,187.54 L1000.70,187.40 L1000.86,187.26 L1001.02,187.12 L1001.19,186.99 L1001.37,186.88 L1001.56,186.77 L1001.76,186.68 L1001.97,186.61 L1002.20,186.57 L1002.46,186.56 L1002.74,186.60 L1003.05,186.68 L1003.39,186.81 L1003.74,186.99 L1004.11,187.19 L1004.47,187.41 L1004.81,187.60 L1005.12,187.77 L1005.39,187.90 L1005.64,187.98 L1005.86,188.03 L1006.05,188.05 L1006.24,188.05 L1006.41,188.02 L1006.57,187.99 L1006.73,187.95 L1006.88,187.90 L1007.03,187.85 L1007.18,187.79 L1007.33,187.73 L1007.48,187.67 L1007.62,187.60 L1007.77,187.53 L1007.91,187.46 L1008.05,187.38 L1008.19,187.28 L1008.33,187.18 L1008.46,187.05 L1008.59,186.90 L1008.71,186.71 L1008.82,186.48 L1008.93,186.19 L1009.03,185.86 L1009.13,185.48 L1009.23,185.07 L1009.34,184.67 L1009.47,184.29 L1009.62,183.96 L1009.78,183.68 L1009.95,183.46 L1010.14,183.28 L1010.33,183.15 L1010.53,183.05 L1010.74,182.97 L1010.95,182.91 L1011.15,182.87 L1011.36,182.84 L1011.58,182.82 L1011.79,182.80 Z"/><circle cx="1012" cy="199" r="4.5"/><circle cx="1122" cy="199" r="14.7"/><path d="M1121.6,190.2 V198.6 L1127.9,202.2"/><path d="M1215.8,199 C1220.5,191 1226,187.3 1232,187.3 C1238,187.3 1243.5,191 1248.2,199 C1243.5,207 1238,210.7 1232,210.7 C1226,210.7 1220.5,207 1215.8,199 Z"/><circle cx="1232" cy="199" r="4.2"/><path d="M1303.9,185.6 V196.3 M1303.9,202.2 V212.4 M1299,202.2 H1308.8 M1315.9,185.6 V193 M1315.9,198.8 V212.4 M1311.3,193 H1320.6 M1328,185.6 V199.2 M1328,204.8 V212.4 M1323.2,204.8 H1332.8" stroke-linecap="butt"/><path d="M1394.2,190 L1385,199 L1394.2,208.2 M1405.6,190 L1414.8,199 L1405.6,208.2"/><rect x="1826.2" y="184.1" width="23.5" height="29.5" rx="3.2"/><path d="M1916.5,185.6 H1911.8 Q1908.7,185.6 1908.7,188.7 V193.4 M1927.5,185.6 H1932.2 Q1935.3,185.6 1935.3,188.7 V193.4 M1908.7,204.4 V209.1 Q1908.7,212.2 1911.8,212.2 H1916.5 M1935.3,204.4 V209.1 Q1935.3,212.2 1932.2,212.2 H1927.5"/><path d="M1992.3,193 A14.9,14.9 0 0 1 2020.9,198.8 M1991.6,183.7 V193 H2001.2 M1991.1,198.8 A14.9,14.9 0 0 0 2019.7,204.6 M2020.3,214.1 V204.9 H2010.6"/><path d="M33,280.4 L42,289.3 L51,280.4" stroke="#4b5674" stroke-width="1.8"/><circle cx="1142" cy="292" r="14.9"/><path d="M1137.44,288.37 C1138.28,285.68 1140.14,284.47 1142.00,284.47 C1144.70,284.47 1146.74,286.42 1146.74,289.02 C1146.74,291.81 1144.42,293.02 1141.72,293.58"/><circle cx="1142" cy="299.0" r="1.05" fill="#1b2a47" stroke="none"/><circle cx="1096" cy="511" r="14.9"/><path d="M1091.44,507.37 C1092.28,504.68 1094.14,503.47 1096.00,503.47 C1098.70,503.47 1100.74,505.42 1100.74,508.02 C1100.74,510.81 1098.42,512.02 1095.72,512.58"/><circle cx="1096" cy="518.0" r="1.05" fill="#1b2a47" stroke="none"/><path d="M1128,502 H1156"/><path d="M1136,502 V499 Q1136,496 1139,496 H1145 Q1148,496 1148,499 V502"/><path d="M1131.7,502 V522.5 Q1131.7,526 1135.2,526 H1148.8 Q1152.3,526 1152.3,522.5 V502"/><path d="M1139,509 V518.7 M1145.1,509 V518.7"/><circle cx="1096" cy="731" r="14.9"/><path d="M1091.44,727.37 C1092.28,724.68 1094.14,723.47 1096.00,723.47 C1098.70,723.47 1100.74,725.42 1100.74,728.02 C1100.74,730.81 1098.42,732.02 1095.72,732.58"/><circle cx="1096" cy="738.0" r="1.05" fill="#1b2a47" stroke="none"/><path d="M1128,722 H1156"/><path d="M1136,722 V719 Q1136,716 1139,716 H1145 Q1148,716 1148,719 V722"/><path d="M1131.7,722 V742.5 Q1131.7,746 1135.2,746 H1148.8 Q1152.3,746 1152.3,742.5 V722"/><path d="M1139,729 V738.7 M1145.1,729 V738.7"/><circle cx="1096" cy="951" r="14.9"/><path d="M1091.44,947.37 C1092.28,944.68 1094.14,943.47 1096.00,943.47 C1098.70,943.47 1100.74,945.42 1100.74,948.02 C1100.74,950.81 1098.42,952.02 1095.72,952.58"/><circle cx="1096" cy="958.0" r="1.05" fill="#1b2a47" stroke="none"/><path d="M1128,942 H1156"/><path d="M1136,942 V939 Q1136,936 1139,936 H1145 Q1148,936 1148,939 V942"/><path d="M1131.7,942 V962.5 Q1131.7,966 1135.2,966 H1148.8 Q1152.3,966 1152.3,962.5 V942"/><path d="M1139,949 V958.7 M1145.1,949 V958.7"/><circle cx="1142" cy="1171" r="14.9"/><path d="M1137.44,1167.37 C1138.28,1164.68 1140.14,1163.47 1142.00,1163.47 C1144.70,1163.47 1146.74,1165.42 1146.74,1168.02 C1146.74,1170.81 1144.42,1172.02 1141.72,1172.58"/><circle cx="1142" cy="1178.0" r="1.05" fill="#1b2a47" stroke="none"/><path d="M982,376.5 V399 M970.8,387.7 H993.2" stroke-linecap="butt"/></g><g fill="#fff"></g></svg>
<svg class="a" style="left:0;top:0" width="400" height="78"><g fill="#fff"><text x="41.8" y="55.2" textLength="28.6" lengthAdjust="spacingAndGlyphs" font-family="Liberation Sans" font-weight="700" font-size="46.5" stroke="#fff" stroke-width="1.3">K</text><text x="71.6" y="55.2" textLength="28.0" lengthAdjust="spacingAndGlyphs" font-family="Liberation Sans" font-weight="700" font-size="46.5" stroke="#fff" stroke-width="1.3">U</text><text x="103" y="55.2" textLength="25.4" lengthAdjust="spacingAndGlyphs" font-family="Liberation Sans" font-weight="700" font-size="46.5" stroke="#fff" stroke-width="1.3">R</text><text x="129" y="55.2" textLength="26.7" lengthAdjust="spacingAndGlyphs" font-family="Liberation Sans" font-weight="700" font-size="46.5" stroke="#fff" stroke-width="1.3">T</text><text x="191" y="55.2" textLength="25.6" lengthAdjust="spacingAndGlyphs" font-family="Liberation Sans" font-weight="700" font-size="46.5" stroke="#fff" stroke-width="1.3">S</text><text x="219" y="55.2" textLength="27.5" lengthAdjust="spacingAndGlyphs" font-family="Liberation Sans" font-weight="700" font-size="46.5" stroke="#fff" stroke-width="1.3">Y</text><text x="244.5" y="55.2" textLength="25.8" lengthAdjust="spacingAndGlyphs" font-family="Liberation Sans" font-weight="700" font-size="46.5" stroke="#fff" stroke-width="1.3">S</text></g><circle cx="172.8" cy="38.8" r="12.6" fill="none" stroke="#fff" stroke-width="7.8"/><line x1="172.8" y1="38.8" x2="172.80" y2="20.80" stroke="#1a80ff" stroke-width="1.6"/><line x1="172.8" y1="38.8" x2="155.64" y2="33.36" stroke="#1a80ff" stroke-width="1.6"/><line x1="172.8" y1="38.8" x2="161.87" y2="53.10" stroke="#1a80ff" stroke-width="1.6"/></svg>
<div class="t" style="left:558.73px;top:25.90px;font-size:27.5px;font-weight:400;color:#ffffff;transform:scaleX(0.9842);-webkit-text-stroke:0.45px #1a80ff;">DXM</div>
<div class="t" style="left:727.40px;top:26.40px;font-size:27.5px;font-weight:400;color:#ffffff;transform:scaleX(1.0012);-webkit-text-stroke:0.45px #1a80ff;">Documents</div>
<div class="t" style="left:976.02px;top:26.00px;font-size:27.5px;font-weight:400;color:#ffffff;transform:scaleX(0.9781);-webkit-text-stroke:0.45px #0066e1;">Studio</div>
<div class="t" style="left:1161.63px;top:26.00px;font-size:27.5px;font-weight:400;color:#ffffff;transform:scaleX(0.9332);-webkit-text-stroke:0.45px #1a80ff;">Data</div>
<div class="t" style="left:1448.46px;top:22.90px;font-size:27.5px;font-weight:400;color:#ffffff;transform:scaleX(0.9639);-webkit-text-stroke:0.45px #1a80ff;">john.smith@kapitalam.com</div>
<div class="t" style="left:101.67px;top:103.20px;font-size:27.5px;font-weight:400;color:#ffffff;transform:scaleX(1.0150);-webkit-text-stroke:0.45px #0066e1;">My App</div>
<div class="t" style="left:241.71px;top:103.20px;font-size:27.5px;font-weight:400;color:#ffffff;transform:scaleX(0.9855);-webkit-text-stroke:0.45px #0066e1;">Overview</div>
<div class="t" style="left:400.00px;top:103.20px;font-size:27.5px;font-weight:400;color:#ffffff;transform:scaleX(0.9908);-webkit-text-stroke:0.45px #0066e1;">Application Details</div>
<div class="t" style="left:668.99px;top:103.20px;font-size:27.5px;font-weight:400;color:#ffffff;transform:scaleX(1.0033);-webkit-text-stroke:0.45px #0066e1;">Inputs</div>
<div class="t" style="left:789.59px;top:103.20px;font-size:27.5px;font-weight:400;color:#ffffff;transform:scaleX(1.0119);-webkit-text-stroke:0.45px #0066e1;">Configuration</div>
<div class="t" style="left:999.65px;top:103.20px;font-size:27.5px;font-weight:400;color:#ffffff;transform:scaleX(0.9489);-webkit-text-stroke:0.45px #0066e1;">Styles</div>
<div class="t" style="left:1116.40px;top:103.20px;font-size:27.5px;font-weight:400;color:#ffffff;transform:scaleX(0.9294);-webkit-text-stroke:0.45px #0066e1;">Assets</div>
<div class="t" style="left:1237.38px;top:103.20px;font-size:27.5px;font-weight:400;color:#ffffff;transform:scaleX(0.9594);-webkit-text-stroke:0.45px #0066e1;">Email Templates</div>
<div class="t" style="left:1474.64px;top:103.20px;font-size:27.5px;font-weight:400;color:#ffffff;transform:scaleX(0.9818);-webkit-text-stroke:0.45px #0066e1;">Upgrades*</div>
<div class="t" style="left:84.03px;top:184.80px;font-size:27.5px;font-weight:400;color:#1c2a47;transform:scaleX(0.9725);-webkit-text-stroke:0.45px #ffffff;">Strategy Breakdown</div>
<div class="t" style="left:83.39px;top:272.20px;font-size:27.5px;font-weight:400;color:#1c2a47;transform:scaleX(1.0131);-webkit-text-stroke:0.45px #eeedf3;">Configuration</div>
<div class="t" style="left:83.39px;top:357.00px;font-size:27.5px;font-weight:400;color:#1c2a47;transform:scaleX(1.0093);-webkit-text-stroke:0.45px #f8f8fc;">Components</div>
<div class="t" style="left:83.41px;top:443.00px;font-size:27.5px;font-weight:400;color:#1c2a47;transform:scaleX(0.9912);-webkit-text-stroke:0.45px #f8f8fc;">Core</div>
<div class="t" style="left:83.39px;top:528.60px;font-size:27.5px;font-weight:400;color:#1c2a47;transform:scaleX(1.0051);-webkit-text-stroke:0.45px #f8f8fc;">Culture</div>
<div class="t" style="left:82.50px;top:614.30px;font-size:27.5px;font-weight:400;color:#1c2a47;transform:scaleX(0.9508);-webkit-text-stroke:0.45px #f8f8fc;">Data</div>
<div class="t" style="left:560.01px;top:273.40px;font-size:32.8px;font-weight:400;color:#0b0b0f;transform:scaleX(0.9873);-webkit-text-stroke:0.45px #f8f8fc;">Configuration</div>
<div class="t" style="left:784.00px;top:372.00px;font-size:27.5px;font-weight:400;color:#1c2a47;transform:scaleX(0.9822);-webkit-text-stroke:0.45px #efeef3;">Add Element</div>
<div class="t" style="left:560.20px;top:494.80px;font-size:27.5px;font-weight:400;color:#0b0b0f;transform:scaleX(1.0021);-webkit-text-stroke:0.45px #f8f8fc;">Components</div>
<div class="t" style="left:643.49px;top:592.20px;font-size:27.5px;font-weight:400;color:#ffffff;transform:scaleX(1.0080);-webkit-text-stroke:0.45px #1a80ff;">Components</div>
<div class="t" style="left:559.50px;top:715.80px;font-size:27.5px;font-weight:400;color:#0b0b0f;transform:scaleX(0.9994);-webkit-text-stroke:0.45px #f8f8fc;">Culture</div>
<div class="t" style="left:643.50px;top:812.00px;font-size:27.5px;font-weight:400;color:#ffffff;transform:scaleX(0.9994);-webkit-text-stroke:0.45px #1a80ff;">Culture</div>
<div class="t" style="left:559.11px;top:935.20px;font-size:27.5px;font-weight:400;color:#0b0b0f;transform:scaleX(0.9438);-webkit-text-stroke:0.45px #ffffff;">Data</div>
<div class="t" style="left:642.59px;top:1032.20px;font-size:27.5px;font-weight:400;color:#ffffff;transform:scaleX(0.9526);-webkit-text-stroke:0.45px #1a80ff;">Data</div>
<div class="t" style="left:560.30px;top:1154.90px;font-size:27.5px;font-weight:400;color:#0b0b0f;transform:scaleX(0.9599);-webkit-text-stroke:0.45px #f8f8fc;">Token*</div>
<div class="t" style="left:559.28px;top:1234.20px;font-size:27.5px;font-weight:400;color:#1c2a47;transform:scaleX(1.0168);-webkit-text-stroke:0.45px #f8f8fc;">25f1069f-52c6-4a91-9d81-5g3i9-44432</div>
<div class="t" style="left:1252.68px;top:859.40px;font-size:27.5px;font-weight:700;color:#7c8099;transform:scaleX(0.9170);-webkit-text-stroke:0.45px #f1f1f6;">Natury Finance BV</div>
<div class="t" style="left:1253.60px;top:911.20px;font-size:23.3px;font-weight:400;color:#7c8099;transform:scaleX(0.9723);-webkit-text-stroke:0.45px #f1f1f6;">Weight</div>
<div class="t" style="left:1438.05px;top:911.20px;font-size:23.3px;font-weight:400;color:#7c8099;transform:scaleX(0.9481);-webkit-text-stroke:0.45px #f1f1f6;">6,65%</div>
<div class="t" style="left:1252.70px;top:955.00px;font-size:23.3px;font-weight:400;color:#7c8099;transform:scaleX(0.8990);-webkit-text-stroke:0.45px #f1f1f6;">ESG Score</div>
<div class="t" style="left:1438.07px;top:955.00px;font-size:23.3px;font-weight:400;color:#7c8099;transform:scaleX(0.9322);-webkit-text-stroke:0.45px #f1f1f6;">8,8%</div>
<div class="t" style="left:1707.45px;top:1368.90px;font-size:27.5px;font-weight:400;color:#7c8099;transform:scaleX(0.9731);-webkit-text-stroke:0.45px #ffffff;">Discard</div>
<div class="t" style="left:1880.21px;top:1368.90px;font-size:27.5px;font-weight:400;color:#ffffff;transform:scaleX(0.8911);-webkit-text-stroke:0.45px #0066e1;">Save</div>
</body></html>
